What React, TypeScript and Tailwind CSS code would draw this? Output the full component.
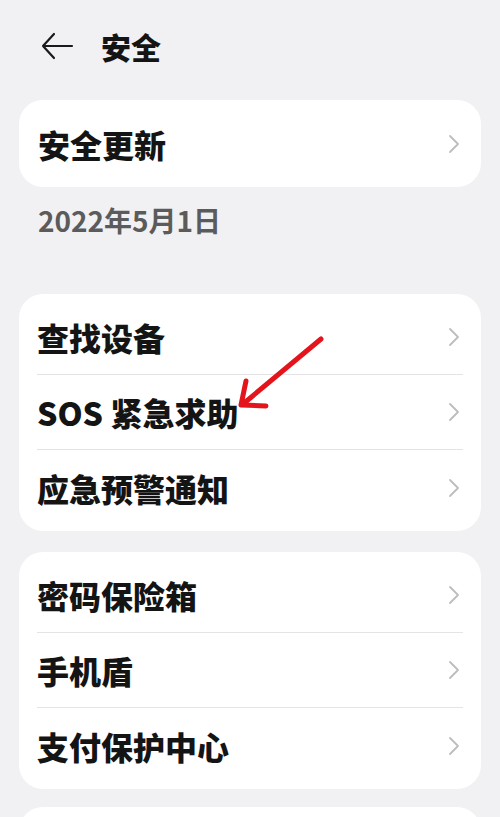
import React from "react";

const font = { fontFamily: '"Noto Sans CJK SC", "Noto Sans", sans-serif' };

function Chevron() {
  return (
    <svg width="12" height="20" viewBox="0 0 12 20" className="shrink-0">
      <path d="M2 2 L10 10 L2 18" fill="none" stroke="#bdbdbd" strokeWidth="1.8" strokeLinecap="round" strokeLinejoin="round" />
    </svg>
  );
}

function Row({ label, last }: { label: string; last?: boolean }) {
  return (
    <div className={`mx-[18px] h-[75px] flex items-center justify-between ${last ? "" : "border-b border-[#e4e4e6]"}`}>
      <span className="text-[32px] font-black text-[#141414] leading-none">{label}</span>
      <div className="mr-[3px]"><Chevron /></div>
    </div>
  );
}

export default function App() {
  return (
    <div className="relative w-[500px] h-[817px] bg-[#f1f1f3] overflow-hidden" style={font}>
      <div className="h-[92px] flex items-center pl-[40px]">
        <svg width="34" height="28" viewBox="0 0 34 28">
          <path d="M32 14 H3 M14 2 L3 14 L14 26" fill="none" stroke="#1a1a1a" strokeWidth="2.2" strokeLinecap="round" strokeLinejoin="round" />
        </svg>
        <span className="ml-[27px] text-[30px] font-black text-[#141414] leading-none">安全</span>
      </div>
      <div className="mx-[19px] mt-[8px] bg-white rounded-[24px] h-[87px] flex items-center justify-between pl-[19px] pr-[21px]">
        <span className="text-[32px] font-black text-[#141414] leading-none">安全更新</span>
        <Chevron />
      </div>
      <div className="pl-[38px] mt-[18px] h-[30px] flex items-center text-[28px] font-bold text-[#5b5b5b] leading-none">2022年5月1日</div>
      <div className="mx-[19px] mt-[59px] bg-white rounded-[24px] py-[6px]">
        <Row label="查找设备" />
        <Row label="SOS 紧急求助" />
        <Row label="应急预警通知" last />
      </div>
      <div className="mx-[19px] mt-[21px] bg-white rounded-[24px] py-[6px]">
        <Row label="密码保险箱" />
        <Row label="手机盾" />
        <Row label="支付保护中心" last />
      </div>
      <div className="mx-[19px] mt-[18px] bg-white rounded-[24px] h-[80px]"></div>
      <svg className="absolute left-0 top-0" width="500" height="817" viewBox="0 0 500 817">
        <path d="M321 339 L243 404 M246 381 L241 405 L266 406" fill="none" stroke="#e3141b" strokeWidth="5" strokeLinecap="round" strokeLinejoin="round" />
      </svg>
    </div>
  );
}
